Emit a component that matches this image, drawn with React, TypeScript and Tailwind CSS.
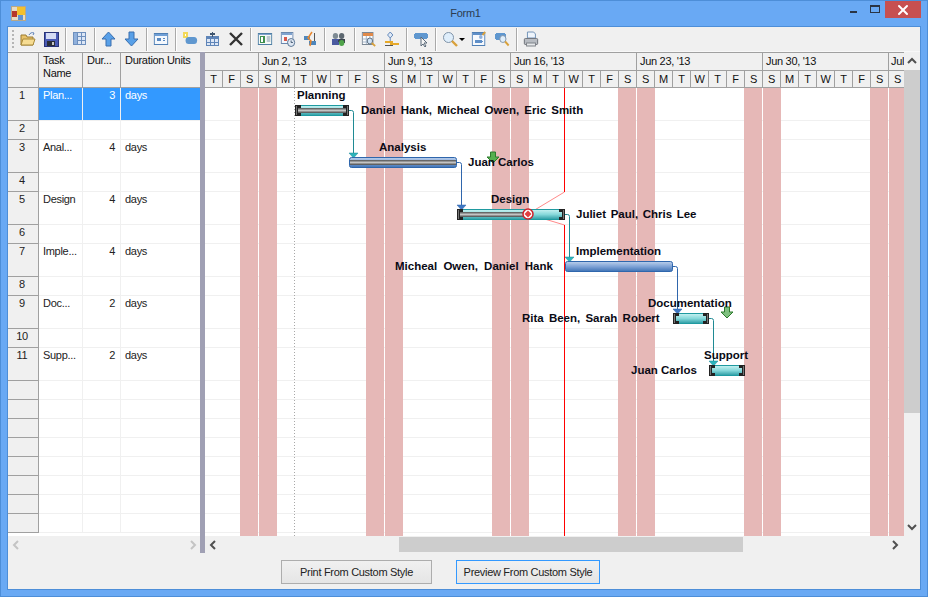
import React from "react";
import { X } from "lucide-react";

const rows = [
  { n: "1", name: "Plan...", dur: "3", units: "days", tall: true, selected: true },
  { n: "2" },
  { n: "3", name: "Anal...", dur: "4", units: "days", tall: true },
  { n: "4" },
  { n: "5", name: "Design", dur: "4", units: "days", tall: true },
  { n: "6" },
  { n: "7", name: "Imple...", dur: "4", units: "days", tall: true },
  { n: "8" },
  { n: "9", name: "Doc...", dur: "2", units: "days", tall: true },
  { n: "10" },
  { n: "11", name: "Supp...", dur: "2", units: "days", tall: true },
  { n: "" },
  { n: "" },
  { n: "" },
  { n: "" },
  { n: "" },
  { n: "" },
  { n: "" },
  { n: "" },
];

const weeks = ["Jun 2, '13", "Jun 9, '13", "Jun 16, '13", "Jun 23, '13", "Jun 30, '13"];
const days = "SMTWTFS".split("");
const lead = ["F", "S"];

const Sep = () => <div className="mx-[6px] h-[23px] w-px shrink-0 bg-[#a9a9a9] shadow-[1px_0_0_#fff]" />;

const Slot = ({ children }: { children: React.ReactNode }) => (
  <div className="flex h-[24px] w-[16px] shrink-0 items-center justify-center">{children}</div>
);

const Gap = () => <div className="w-[7px] shrink-0" />;

function Ico({ children, w = 16 }: { children: React.ReactNode; w?: number }) {
  return (
    <svg width="16" height="16" viewBox={`0 0 ${w} 16`} preserveAspectRatio="none" shapeRendering="crispEdges">
      {children}
    </svg>
  );
}

const Arrow = ({ down }: { down?: boolean }) => (
  <Ico>
    <path
      d={down ? "M5 1h5v7h4L7.5 15 1 8h4z" : "M7.5 1L14 8h-4v7H5V8H1z"}
      fill="#58a0e8"
      stroke="#3a6fae"
      shapeRendering="auto"
    />
  </Ico>
);

const Toolbar = () => (
  <div className="flex h-[25px] items-center border-b border-[#f8f8f8] bg-[#f0f0f0] pl-[4px]">
    <div className="mr-[5px] flex h-[18px] w-[3px] flex-col justify-between">
      {[0, 1, 2, 3, 4].map((i) => (
        <div key={i} className="h-[2px] w-[2px] bg-[#b5b5b5]" />
      ))}
    </div>
    <div className="w-[17px] shrink-0">
      <Ico>
        <path d="M1 4h5l1 2h6v8H1z" fill="#e8c26a" stroke="#9a7a30" shapeRendering="auto" />
        <path d="M3 8h12l-2 6H1z" fill="#f6dc92" stroke="#a98a3a" shapeRendering="auto" />
        <path d="M9 4c1-2 3-3 5-2M14 2l-1 2" fill="none" stroke="#5a7fb5" shapeRendering="auto" />
      </Ico>
    </div>
    <div className="w-[6px] shrink-0" />
    <Slot>
      <Ico>
        <rect x="1" y="1" width="14" height="14" fill="#4a5bb5" stroke="#2a3478" />
        <rect x="3" y="2" width="10" height="6" fill="#d5dcf4" />
        <rect x="4" y="10" width="8" height="5" fill="#2a2e38" />
        <rect x="9" y="11" width="2" height="3" fill="#c8c8c8" />
      </Ico>
    </Slot>
    <Sep />
    <Slot>
      <Ico>
        <rect x="1.5" y="1.5" width="12" height="12" fill="#dce6f5" stroke="#6d8fbd" />
        <path d="M1 5h13M1 9h13M5.5 1v13M9.5 1v13" stroke="#6d8fbd" />
        <rect x="2" y="2" width="3" height="11" fill="#8fb0dc" />
      </Ico>
    </Slot>
    <Sep />
    <Slot><Arrow /></Slot>
    <Gap />
    <Slot><Arrow down /></Slot>
    <Sep />
    <Slot>
      <Ico w={18}>
        <rect x="1.5" y="2.5" width="15" height="11" fill="#f4f8fd" stroke="#4f7fb5" />
        <rect x="2" y="3" width="14" height="2" fill="#6f9fd6" />
        <rect x="4" y="7" width="5" height="3" fill="#5a8ac2" />
        <rect x="11" y="7" width="3" height="1" fill="#5a8ac2" />
        <rect x="11" y="9" width="3" height="1" fill="#5a8ac2" />
      </Ico>
    </Slot>
    <Sep />
    <Slot>
      <Ico w={18}>
        <rect x="1" y="1" width="6" height="6" fill="#f3d95a" />
        <rect x="3" y="3" width="2" height="2" fill="#fff" />
        <rect x="4" y="6" width="13" height="7" rx="3.5" fill="#5f97cf" shapeRendering="auto" />
      </Ico>
    </Slot>
    <Gap />
    <Slot>
      <Ico>
        <rect x="1.5" y="5.5" width="12" height="9" fill="#dce6f5" stroke="#5f85b8" />
        <rect x="2" y="6" width="11" height="2" fill="#5f85b8" />
        <path d="M5.5 8v6M9.5 8v6M2 11h11" stroke="#5f85b8" />
        <rect x="7" y="1" width="1" height="5" fill="#40566f" />
        <rect x="5" y="2" width="5" height="2" fill="#40566f" />
      </Ico>
    </Slot>
    <Gap />
    <Slot>
      <svg width="16" height="16" viewBox="0 0 16 16">
        <path d="M2 2l12 12M14 2L2 14" stroke="#333" strokeWidth="2.4" fill="none" />
      </svg>
    </Slot>
    <Sep />
    <Slot>
      <Ico w={18}>
        <rect x="1.5" y="2.5" width="15" height="11" fill="#f5f9f5" stroke="#4f7fa5" />
        <rect x="2" y="3" width="14" height="1" fill="#7fa3cf" />
        <rect x="3" y="5" width="6" height="7" fill="#3f8f4f" />
        <rect x="5" y="6" width="2" height="5" fill="#fff" />
        <path d="M11 6h4M11 8h4M11 10h4" stroke="#7a90a8" />
      </Ico>
    </Slot>
    <Gap />
    <Slot>
      <Ico w={18}>
        <rect x="1.5" y="1.5" width="13" height="11" fill="#f4f7fc" stroke="#6a88ad" />
        <rect x="2" y="2" width="12" height="2" fill="#7fa3cf" />
        <rect x="4" y="6" width="4" height="4" fill="#d8584a" />
        <circle cx="12.5" cy="11.5" r="4" fill="#dfe7f2" stroke="#52708f" shapeRendering="auto" />
        <path d="M12.5 9.5v2h2" fill="none" stroke="#40566f" />
      </Ico>
    </Slot>
    <div className="w-[6px] shrink-0" />
    <Slot>
      <Ico>
        <rect x="2" y="5" width="6" height="4" fill="#4d86bb" />
        <rect x="7" y="10" width="7" height="4" fill="#4d86bb" />
        <path d="M10 1L6 7l3 3-1 5" fill="none" stroke="#e8872e" strokeWidth="1.5" shapeRendering="auto" />
        <rect x="12" y="2" width="1" height="8" fill="#555" />
      </Ico>
    </Slot>
    <Sep />
    <Slot>
      <Ico w={18}>
        <circle cx="5" cy="5" r="3" fill="#7d8a93" shapeRendering="auto" />
        <circle cx="12" cy="5" r="3" fill="#5c6770" shapeRendering="auto" />
        <rect x="1" y="8" width="8" height="6" rx="2" fill="#4a5aa0" />
        <rect x="8" y="8" width="8" height="4" rx="2" fill="#39424d" />
        <circle cx="12" cy="12" r="3" fill="#4fa34a" shapeRendering="auto" />
      </Ico>
    </Slot>
    <div className="w-px shrink-0" />
    <Sep />
    <Slot>
      <Ico w={18}>
        <rect x="1.5" y="1.5" width="12" height="12" fill="#fdfdfd" stroke="#7a8794" />
        <rect x="2" y="2" width="11" height="3" fill="#e08a4a" />
        <path d="M2 8h11M2 11h11M6 5v8M10 5v8" stroke="#9fb2c8" />
        <circle cx="10" cy="10" r="3" fill="#cfe2f5" stroke="#5a6a7a" shapeRendering="auto" />
        <path d="M12 12l4 3" stroke="#d9a13b" strokeWidth="2" shapeRendering="auto" />
      </Ico>
    </Slot>
    <Gap />
    <Slot>
      <Ico w={18}>
        <path d="M7 1l3 3-3 3-3-3z" fill="#dfe9f6" stroke="#5f85b8" shapeRendering="auto" />
        <path d="M7 7v3" stroke="#5f85b8" />
        <rect x="1" y="10" width="9" height="2" fill="#e6a92a" />
        <rect x="7" y="12" width="10" height="2" fill="#e6a92a" />
        <rect x="1" y="14" width="9" height="1" fill="#555" />
      </Ico>
    </Slot>
    <Sep />
    <Slot>
      <Ico>
        <rect x="1" y="2" width="14" height="6" rx="3" fill="#5f97cf" />
        <path d="M8 6v9l2-2 2 3 1-1-2-3h3z" fill="#f5f5f5" stroke="#5a6a7a" shapeRendering="auto" />
      </Ico>
    </Slot>
    <Sep />
    <Slot>
      <Ico>
        <circle cx="6.5" cy="6.5" r="5" fill="#dfeefb" stroke="#7f93a8" shapeRendering="auto" />
        <path d="M10 10l5 5" stroke="#d9a13b" strokeWidth="2.4" shapeRendering="auto" />
      </Ico>
    </Slot>
    <div className="ml-px h-0 w-0 border-x-[3px] border-t-[3px] border-x-transparent border-t-black" />
    <div className="w-[6px] shrink-0" />
    <Slot>
      <Ico w={18}>
        <rect x="1.5" y="1.5" width="14" height="13" fill="#f6f9fd" stroke="#4f7fb5" />
        <rect x="2" y="2" width="13" height="2" fill="#5f8fc8" />
        <circle cx="11" cy="6" r="2" fill="#8fb0dc" shapeRendering="auto" />
        <rect x="4" y="9" width="9" height="3" rx="1.5" fill="#5f8fc8" />
        <path d="M13 4l3-3" stroke="#d9a13b" strokeWidth="2" shapeRendering="auto" />
      </Ico>
    </Slot>
    <Gap />
    <Slot>
      <Ico w={18}>
        <rect x="1" y="2" width="13" height="7" rx="3" fill="#5f97cf" />
        <circle cx="10" cy="8" r="3.5" fill="#dfeefb" stroke="#7f93a8" shapeRendering="auto" />
        <path d="M12.5 10.5l4 4" stroke="#d9a13b" strokeWidth="2.2" shapeRendering="auto" />
      </Ico>
    </Slot>
    <Sep />
    <Slot>
      <Ico w={18}>
        <path d="M5 1h7l2 2v4H5z" fill="#eef4fb" stroke="#6f8fb5" />
        <rect x="1.5" y="7.5" width="15" height="6" rx="1" fill="#b8bcc2" stroke="#6e7278" />
        <rect x="4" y="12" width="10" height="3" fill="#e6e8ea" stroke="#7d8187" />
      </Ico>
    </Slot>
  </div>
);

const GridHead = ({ className, children }: { className: string; children?: React.ReactNode }) => (
  <div className={`shrink-0 border-r border-[#a0a0a0] px-[4px] pt-[1px] leading-[13px] ${className}`}>{children}</div>
);

const LeftGrid = () => (
  <div className="flex w-[192px] shrink-0 flex-col overflow-hidden">
    <div className="flex h-[36px] shrink-0 border-y border-[#a0a0a0] bg-[#f0f0f0] text-[#111]">
      <GridHead className="w-[31px]" />
      <GridHead className="w-[44px]">
        Task
        <br />
        Name
      </GridHead>
      <GridHead className="w-[38px]">Dur...</GridHead>
      <div className="flex-1 whitespace-nowrap px-[4px] pt-[1px] leading-[13px]">Duration Units</div>
    </div>
    <div className="h-[448px] overflow-hidden bg-white leading-[14px]">
      {rows.map((r, i) => (
        <div key={i} className={`flex border-b border-[#f0f0f0] ${r.tall ? "h-[33px]" : "h-[19px]"}`}>
          <div className="w-[31px] shrink-0 border-r border-[#a0a0a0] bg-[#f0f0f0] pr-[2px] text-center text-[#222] shadow-[0_1px_0_#a0a0a0]">
            {r.n}
          </div>
          <div className={`flex flex-1 ${r.selected ? "bg-[#3399ff] text-white" : "text-[#222]"}`}>
            <div className="w-[44px] shrink-0 border-r border-[#f0f0f0] pl-[4px]">{r.name}</div>
            <div className="w-[38px] shrink-0 border-r border-[#f0f0f0] pr-[5px] text-right">{r.dur}</div>
            <div className="flex-1 pl-[4px]">{r.units}</div>
          </div>
        </div>
      ))}
    </div>
  </div>
);

const WeekCell = ({ w, label }: { w: string; label?: string }) => (
  <div className={`h-full shrink-0 border-r border-[#a0a0a0] pl-[3px] leading-[17px] ${w}`}>{label}</div>
);

const DayCell = ({ d }: { d: string }) => (
  <div className="h-full w-[18px] shrink-0 border-r border-[#a0a0a0] text-center leading-[16px]">{d}</div>
);

const ChartHeader = () => (
  <div className="h-[36px] w-[699px] shrink-0 overflow-hidden border-y border-[#a0a0a0] bg-[#f0f0f0] text-[#111]">
    <div className="flex h-[18px] border-b border-[#a0a0a0]">
      <WeekCell w="w-[54px]" />
      {weeks.map((w) => (
        <WeekCell key={w} w="w-[126px]" label={w} />
      ))}
      <div className="w-[15px] shrink-0 overflow-hidden whitespace-nowrap pl-[2px] leading-[17px]">Jul</div>
    </div>
    <div className="flex h-[16px]">
      <DayCell d="T" />
      {lead.map((d, i) => (
        <DayCell key={i} d={d} />
      ))}
      {weeks.map((w) => days.map((d, i) => <DayCell key={w + i} d={d} />))}
      <DayCell d="S" />
    </div>
  </div>
);

// weekend bands, repeated every 126px
const Bands = () => (
  <div className="absolute inset-0 flex pl-[35px]">
    {[0, 1, 2, 3, 4, 5].map((i) => (
      <div key={i} className="flex w-[126px] shrink-0">
        <div className="w-[18px] bg-[#e6b8b7]" />
        <div className="ml-px w-[18px] bg-[#e6b8b7]" />
      </div>
    ))}
  </div>
);

const Caps = ({ x, y, w }: { x: number; y: number; w: number }) => (
  <g>
    <path d={`M${x} ${y}h6v3h-3v5h3v3h-6z`} fill="#222" />
    <path d={`M${x + w} ${y}h-6v3h3v5h-3v3h6z`} fill="#222" />
    <path d={`M${x + 1} ${y + 1}h1v9h-1zM${x + w - 1} ${y + 1}h-1v9h1z`} fill="#777" />
  </g>
);

const TealBar = ({ x, y, w, prog }: { x: number; y: number; w: number; prog?: number }) => (
  <g>
    <rect x={x + 0.5} y={y + 0.5} width={w - 1} height={10} rx="2" fill="url(#teal)" stroke="#1f9aa0" />
    {prog ? <rect x={x} y={y + 3} width={prog} height={5} fill="url(#prog)" /> : null}
    <Caps x={x} y={y} w={w} />
  </g>
);

const BlueBar = ({ x, y, w, prog }: { x: number; y: number; w: number; prog?: boolean }) => (
  <g>
    <rect x={x + 0.5} y={y + 0.5} width={w - 1} height={10} rx="2" fill="url(#blue)" stroke="#2f66ac" />
    {prog ? <rect x={x + 1} y={y + 3} width={w - 2} height={5} fill="url(#prog)" /> : null}
  </g>
);

const Link = ({ x, y, to, color, fill }: { x: number; y: number; to: number; color: string; fill: string }) => (
  <g>
    <path d={`M${x} ${y + 0.5}h2.5q2 0 2 2V${to}`} fill="none" stroke={color} />
    <path d={`M${x} ${to}h9l-4.5 5z`} fill={fill} stroke={color} strokeWidth="0.5" />
  </g>
);

const GreenArrow = ({ x, y, dim }: { x: number; y: number; dim?: boolean }) => (
  <path
    d={`M${x - 2.5} ${y}h5v5h3.5l-6 6-6-6h3.5z`}
    fill={dim ? "#7fc07f" : "#55b04f"}
    stroke="#2d7a2d"
  />
);

const GanttGraphics = () => (
  <svg className="absolute left-0 top-0" width="699" height="448" viewBox="205 88 699 448">
    <defs>
      <linearGradient id="teal" x1="0" y1="0" x2="0" y2="1">
        <stop offset="0" stopColor="#c8f2f2" />
        <stop offset="0.5" stopColor="#86d8da" />
        <stop offset="1" stopColor="#2a9ba3" />
      </linearGradient>
      <linearGradient id="blue" x1="0" y1="0" x2="0" y2="1">
        <stop offset="0" stopColor="#bcd0ec" />
        <stop offset="0.5" stopColor="#7fa3d6" />
        <stop offset="1" stopColor="#3f73b5" />
      </linearGradient>
      <linearGradient id="prog" x1="0" y1="0" x2="0" y2="1">
        <stop offset="0" stopColor="#505050" />
        <stop offset="0.5" stopColor="#c4c4c4" />
        <stop offset="1" stopColor="#484848" />
      </linearGradient>
    </defs>
    <path d="M294.5 88V536" stroke="#a8a8a8" strokeDasharray="1 2" />
    <path d="M564.5 192L528 214L564.5 225" fill="none" stroke="#ff8a8a" />
    <path d="M564.5 88V192M564.5 225V536" fill="none" stroke="#ff0000" />
    <Link x={349} y={110} to={153} color="#1f8a94" fill="#2cb4bc" />
    <Link x={457} y={162} to={205} color="#2f66ac" fill="#3f78c4" />
    <Link x={565} y={214} to={257} color="#1f8a94" fill="#2cb4bc" />
    <Link x={673} y={266} to={309} color="#2f66ac" fill="#3f78c4" />
    <Link x={709} y={318} to={361} color="#1f8a94" fill="#2cb4bc" />
    <TealBar x={295} y={105} w={54} prog={54} />
    <BlueBar x={349} y={157} w={108} prog />
    <TealBar x={457} y={209} w={108} prog={72} />
    <BlueBar x={565} y={261} w={108} />
    <TealBar x={673} y={313} w={36} />
    <TealBar x={709} y={365} w={36} />
    <circle cx="528" cy="214" r="5" fill="#fff" stroke="#d0202a" strokeWidth="1.5" />
    <path d="M528 210.5l3.5 3.5-3.5 3.5-3.5-3.5z" fill="#e04040" />
    <GreenArrow x={493} y={152} />
    <GreenArrow x={727} y={307} dim />
  </svg>
);

const GanttLabels = () => (
  <div className="absolute inset-0 text-[11.5px] font-bold leading-[14px] tracking-normal text-[#0a0a14]">
    <span className="absolute left-[92px] top-[0px]">Planning</span>
    <span className="absolute left-[156px] top-[15px] whitespace-nowrap [word-spacing:2px]">Daniel Hank, Micheal Owen, Eric Smith</span>
    <span className="absolute left-[174px] top-[52px]">Analysis</span>
    <span className="absolute left-[263px] top-[67px] whitespace-nowrap">Juan Carlos</span>
    <span className="absolute left-[286px] top-[104px]">Design</span>
    <span className="absolute left-[371px] top-[119px] whitespace-nowrap [word-spacing:1.4px]">Juliet Paul, Chris Lee</span>
    <span className="absolute left-[371px] top-[156px]">Implementation</span>
    <span className="absolute left-[190px] top-[171px] whitespace-nowrap [word-spacing:3px]">Micheal Owen, Daniel Hank</span>
    <span className="absolute left-[443px] top-[208px]">Documentation</span>
    <span className="absolute left-[317px] top-[223px] whitespace-nowrap [word-spacing:2px]">Rita Been, Sarah Robert</span>
    <span className="absolute left-[499px] top-[260px]">Support</span>
    <span className="absolute left-[426px] top-[275px] whitespace-nowrap">Juan Carlos</span>
  </div>
);

const ChartBody = () => (
  <div className="relative h-[448px] w-[699px] overflow-hidden bg-white">
    <div className="absolute inset-0">
      {rows.map((r, i) => (
        <div key={i} className={`border-b border-[#f0f0f0] ${r.tall ? "h-[33px]" : "h-[19px]"}`} />
      ))}
    </div>
    <Bands />
    <GanttGraphics />
    <GanttLabels />
  </div>
);

const Chev = ({ d, dim }: { d: string; dim?: boolean }) => (
  <svg width="10" height="10" viewBox="0 0 10 10">
    <path d={d} fill="none" stroke={dim ? "#c4c4c4" : "#505050"} strokeWidth="2" />
  </svg>
);

export default function App() {
  return (
    <div className="flex h-[597px] w-[928px] flex-col overflow-hidden border border-[#4d8ed8] bg-[#69a9f4] font-['Liberation_Sans',sans-serif] text-[11px] tracking-[-0.3px]">
      <div className="relative flex h-[25px] shrink-0 items-center justify-center text-[#2c3c50]">
        <svg className="absolute left-[10px] top-[5px]" width="15" height="15" viewBox="0 0 15 15" shapeRendering="crispEdges">
          <rect x="0.5" y="0.5" width="14" height="14" fill="#e8dcc4" stroke="#b8a888" />
          <rect x="6" y="1" width="8" height="8" fill="#f3c02d" />
          <rect x="1" y="5" width="5" height="6" fill="#b5372b" />
          <rect x="7" y="9" width="5" height="5" fill="#5f93d3" />
        </svg>
        <span className="ml-[3px]">Form1</span>
        <div className="absolute right-[70px] top-[10px] h-[2px] w-[7px] bg-[#2a3444]" />
        <div className="absolute right-[47px] top-[4px] h-[8px] w-[10px] border border-t-2 border-[#2a3444]" />
        <div className="absolute right-[6px] top-0 flex h-[17px] w-[36px] items-center justify-center bg-[#c75050]">
          <X size={16} strokeWidth={3} color="#fff" />
        </div>
      </div>
      <div className="mx-[6px] flex h-[564px] flex-col border border-[#4d8ed8] bg-[#f0f0f0]">
        <Toolbar />
        <div className="flex h-[484px]">
          <LeftGrid />
          <div className="h-[501px] w-[5px] shrink-0 bg-[#a0a0b4]" />
          <div className="flex flex-col">
            <ChartHeader />
            <ChartBody />
          </div>
          <div className="flex h-[484px] w-[16px] flex-col bg-[#f0f0f0]">
            <div className="flex h-[18px] items-center justify-center">
              <Chev d="M1 7l4-4 4 4" />
            </div>
            <div className="h-[343px] bg-[#cdcdcd]" />
            <div className="flex-1" />
            <div className="flex h-[18px] items-center justify-center">
              <Chev d="M1 3l4 4 4-4" />
            </div>
          </div>
        </div>
        <div className="flex h-[17px] items-start pt-px">
          <div className="flex h-[15px] w-[192px] items-center justify-between pl-[3px] pr-[2px]">
            <Chev d="M7 1L3 5l4 4" dim />
            <Chev d="M3 1l4 4-4 4" dim />
          </div>
          <div className="w-[5px]" />
          <div className="flex h-[15px] w-[16px] items-center justify-center">
            <Chev d="M7 1L3 5l4 4" />
          </div>
          <div className="ml-[178px] h-[15px] w-[344px] bg-[#cdcdcd]" />
          <div className="ml-[147px] flex h-[15px] w-[10px] items-center justify-center">
            <Chev d="M3 1l4 4-4 4" />
          </div>
        </div>
        <div className="flex flex-1 pl-[273px] pt-[7px]">
          <button className="h-[24px] w-[151px] border border-[#adadad] bg-gradient-to-b from-[#f0f0f0] to-[#e5e5e5] text-[#222]">
            Print From Custom Style
          </button>
          <button className="ml-[24px] h-[24px] w-[144px] border border-[#3399ff] bg-gradient-to-b from-[#f0f0f0] to-[#e5e5e5] text-[#222]">
            Preview From Custom Style
          </button>
        </div>
      </div>
    </div>
  );
}
